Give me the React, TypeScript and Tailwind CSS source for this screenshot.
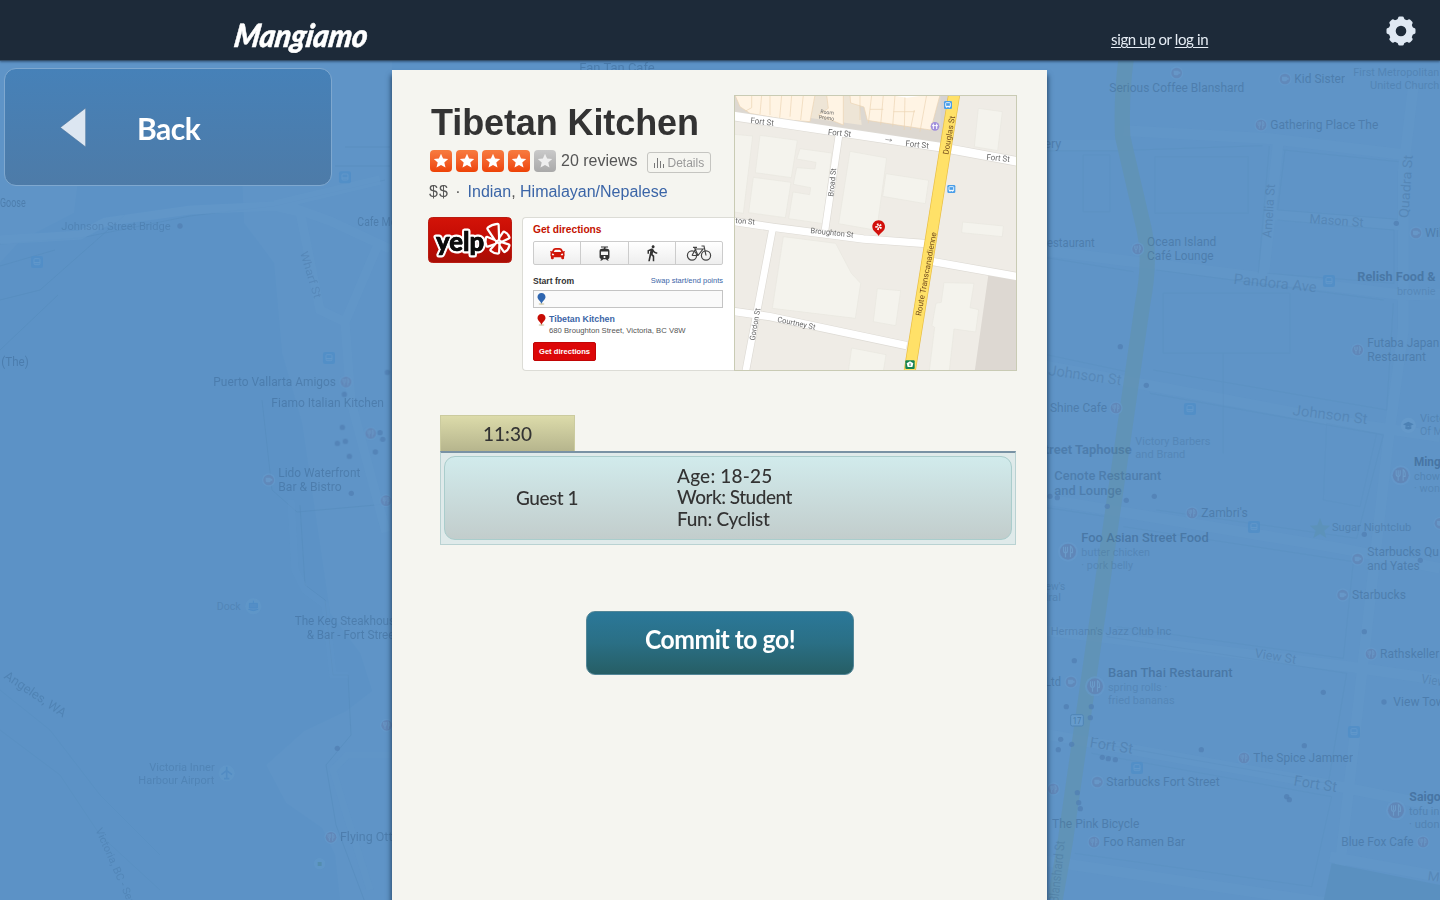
import React from "react";
import { MdDirectionsWalk, MdTram } from "react-icons/md";
import { FaCar } from "react-icons/fa";

type Label = [x: number, y: number, w: number, text: string, size?: number, weight?: number, opacity?: number, rotate?: number];

function Labels({ items, fill }: { items: Label[]; fill: string }) {
  return (
    <g fill={fill} fontFamily="Roboto, sans-serif">
      {items.map(([x, y, w, text, size = 36, weight = 400, opacity = 0.36, rotate = 0], i) => (
        <text key={i} x={x} y={y} fontSize={size} fontWeight={weight} opacity={opacity} textLength={w} lengthAdjust="spacingAndGlyphs" transform={rotate ? `rotate(${rotate} ${x} ${y})` : undefined}>
          {text}
        </text>
      ))}
    </g>
  );
}

function Food({ at, big }: { at: [number, number][]; big?: boolean }) {
  const k = big ? 1.5 : 1;
  return (
    <>
      {at.map(([x, y], i) => (
        <g key={i} transform={`translate(${x} ${y}) scale(${k})`}>
          <circle r="20" fill="#6b9fce" opacity=".6" />
          <circle r="16" fill="#6178a8" opacity=".75" />
          <path d="M-9-10v8q0 4 4 4v9M-5-10v10M-1-10v8q0 4-4 4M5 11v-22q5 3 4 13h-4" fill="none" stroke="#719fcb" strokeWidth="2.2" />
        </g>
      ))}
    </>
  );
}

function Cups({ at }: { at: [number, number][] }) {
  return (
    <>
      {at.map(([x, y], i) => (
        <g key={i} transform={`translate(${x} ${y})`}>
          <circle r="20" fill="#6b9fce" opacity=".6" />
          <circle r="16" fill="#6178a8" opacity=".65" />
          <path d="M-9-7H6v9q0 5-5 5h-5q-5 0-5-5zM6-4h5v6H6" fill="#6b9ac9" />
        </g>
      ))}
    </>
  );
}

function Dots({ at }: { at: [number, number][] }) {
  return (
    <>
      {at.map(([x, y], i) => (
        <circle key={i} cx={x} cy={y} r="8" fill="#4b74a8" opacity=".75" />
      ))}
    </>
  );
}

function Buses({ at }: { at: [number, number][] }) {
  return (
    <>
      {at.map(([x, y], i) => (
        <g key={i} transform={`translate(${x} ${y})`}>
          <rect x="-18" y="-18" width="36" height="36" rx="6" fill="#488bc8" opacity=".8" />
          <rect x="-9" y="-10" width="18" height="18" rx="3" fill="none" stroke="#649bce" strokeWidth="3" />
          <path d="M-9 2H9" stroke="#649bce" strokeWidth="4" />
        </g>
      ))}
    </>
  );
}

function CityBackdrop() {
  const ink = "#17365c";
  return (
    <svg className="absolute inset-0 h-full w-full opacity-65" viewBox="0 0 1440 900" aria-hidden="true">
      <rect width="1440" height="900" fill="#5b92c6" />
      <path d="M0 60H392V900H340l-5-45-13-27-36-25-20-38 38-34 42-20 26-20-12-38-30-40-28-190-20-70-8-90-30-40-5-115-155 25-10 80-54 28-50 55H0z" fill="#6095c7" />
      <rect x="1040" y="60" width="400" height="840" fill="#6095c7" />
      <g fill="none" stroke="#5287b7" strokeWidth="1" opacity=".6">
        <path d="M0 244 80 238 190 216 275 206 385 180M0 266 55 250M0 300l40-10 85-75M0 350l58-55M345 147h45M335 166h55M262 400l10 90 25 22 90-8M300 505l5 80 20 15 8 75h15l3 60-25 30 10 60 30 80" />
        <path d="M0 690l50 40 50 65 60 60M0 730l60 45 40 60 60 55" opacity=".5" />
      </g>
      <g fill="none" stroke="#669acb" strokeWidth="9" opacity=".75">
        <path d="M0 240 80 235 105 222 190 210 275 206 300 212 320 310 345 322 380 240M280 203l50 18 60 28M275 205l105-25M345 322l6 80 35 130" />
        <path d="M291 500l4 70 10 20 20 15 8 70h15M392 755h-45l-14 15 12 40 25 80" strokeWidth="7" opacity=".5" />
      </g>
      <g transform="translate(0 180) scale(.333333)">
        <Labels fill={ink} items={[[0, 81, 77, "Goose"], [184, 150, 328, "Johnson Street Bridge", 34, 400, 0.25], [1072, 139, 118, "Cafe Mo"], [900, 218, 145, "Wharf St", 34, 400, 0.2, 73], [4, 559, 82, "(The)"], [640, 619, 368, "Puerto Vallarta Amigos"], [814, 682, 338, "Fiamo Italian Kitchen"], [835, 892, 246, "Lido Waterfront"], [835, 934, 190, "Bar & Bistro"]]} />
        <Food at={[[1038, 606], [1112, 760], [1158, 962]]} />
        <Cups at={[[806, 900]]} />
        <Dots at={[[540, 138], [1033, 643], [1162, 577], [1027, 742], [1012, 790], [1036, 784], [1048, 829], [1140, 758], [1148, 778], [1126, 816], [1054, 940]]} />
        <Buses at={[[111, 246], [987, 534], [1035, -8]]} />
      </g>
      <g transform="translate(0 540) scale(.333333)">
        <Labels fill={ink} items={[[650, 209, 72, "Dock", 34, 400, 0.22], [884, 255, 320, "The Keg Steakhouse"], [920, 298, 275, "& Bar - Fort Street"], [10, 413, 215, "Angeles, WA", 38, 400, 0.26, 34], [448, 692, 196, "Victoria Inner", 33, 400, 0.24], [415, 732, 228, "Harbour Airport", 33, 400, 0.24], [1020, 904, 190, "Flying Otter"], [286, 870, 260, "Victoria, BC - Seat", 32, 400, 0.2, 66]]} />
        <Food at={[[993, 892], [1160, 556]]} />
        <g fill="#679dcd" opacity=".6"><circle cx="760" cy="199" r="24" /><circle cx="680" cy="700" r="24" /><circle cx="959" cy="971" r="17" /></g>
        <path d="M680 680v35M664 704l16-12 16 12M672 716h16" stroke="#4d88c2" strokeWidth="5" fill="none" />
        <path d="M748 190h24v14h-24zM745 208q15 8 30 0M760 182v8" stroke="#4788c5" strokeWidth="3" fill="#4f8cc6" />
        <rect x="953" y="966" width="12" height="12" fill="#4f8aa3" />
        <Dots at={[[1012, 625]]} />
      </g>
      <g transform="translate(1040 60) scale(.333333)" fill="none">
        <g stroke="#689ccc" opacity=".5" strokeWidth="32">
          <path d="M0 255H240M250 212l440 24 420 50M715 245l-45 410M700 465l380 30M1120 80l-30 250v480l-45 330-160 1410M0 570l520 65 570 70 110-2M0 915l960 180 240 35M0 1315l900 150 300 60M0 1710l930 110 270 40M0 2020l900 160 300 60M0 2400l870 130M870 2390l330 60" />
        </g>
        <g stroke="#5489b9" opacity=".5" strokeWidth="2">
          <path d="M0 272h232l435-15M730 270l345 35M688 258 655 640M735 270l-22 180 360 28M712 480l350 30v160l-380-30M0 590l280 45M350 630l680 90M1060 730l-20 320-700-120M0 880l260 55M330 1000l700 125-80 310-600-85M0 1340l200 30M250 1400l690 105-30 290-680-95M200 1730l720 110-55 330-690-120M155 2080l720 130-60 270-710-100" />
          <path d="M130 285h80v170h-80zM345 290h280v170H345zM370 700h380v180H370zM550 880v300M860 1090l150 30-50 220-110-20z" opacity=".6" />
        </g>
        <path d="M258 0q-15 110-10 230l65 280q20 90-5 220L75 2350l-30 170" stroke="#6394ac" strokeWidth="46" opacity=".9" />
        <path d="M875 2410l325 65v50H850z" fill="#598fbd" />
        <Labels fill={ink} items={[[208, 96, 405, "Serious Coffee Blanshard"], [763, 69, 152, "Kid Sister"], [940, 47, 258, "First Metropolitan", 34, 400, 0.25], [990, 86, 208, "United Church", 34, 400, 0.25], [691, 207, 324, "Gathering Place The"], [0, 264, 64, "tery"], [0, 561, 164, "Restaurant"], [321, 558, 208, "Ocean Island"], [321, 600, 200, "Café Lounge"], [694, 535, 162, "Amelia St", 38, 400, 0.24, -86], [808, 489, 162, "Mason St", 38, 400, 0.24, 4], [1105, 475, 190, "Quadra St", 40, 400, 0.24, -86], [1155, 531, 72, "Wild"], [580, 671, 250, "Pandora Ave", 44, 400, 0.22, 6], [952, 664, 235, "Relish Food &", 36, 700, 0.46], [1071, 704, 116, "brownie", 34, 400, 0.22], [982, 861, 216, "Futaba Japan"], [982, 903, 176, "Restaurant"]]} />
        <Food at={[[663, 195], [293, 567], [953, 870]]} />
        <Cups at={[[410, 39], [735, 57], [1128, 519]]} />
        <Dots at={[[1069, 490], [241, 860]]} />
        <Buses at={[[867, 663]]} />
      </g>
      <g transform="translate(1040 340) scale(.333333)">
        <Labels fill={ink} items={[[24, 105, 220, "Johnson St", 44, 400, 0.22, 8], [757, 225, 225, "Johnson St", 44, 400, 0.22, 7], [30, 216, 171, "Shine Cafe"], [-10, 342, 285, "Street Taphouse", 36, 700], [286, 314, 225, "Victory Barbers", 34, 400, 0.22], [286, 353, 150, "and Brand", 34, 400, 0.22], [43, 420, 321, "Cenote Restaurant", 36, 500], [43, 466, 202, "and Lounge", 36, 500], [484, 531, 139, "Zambri's"], [876, 572, 238, "Sugar Nightclub", 34, 400, 0.3], [124, 606, 382, "Foo Asian Street Food", 37, 500, 0.46], [124, 647, 206, "butter chicken", 34, 400, 0.22], [124, 686, 155, "· pork belly", 34, 400, 0.22], [982, 648, 215, "Starbucks Qu"], [982, 690, 157, "and Yates"], [936, 777, 162, "Starbucks"], [1122, 378, 98, "Mings", 36, 700, 0.5], [1122, 419, 78, "chow", 34, 400, 0.25], [1122, 457, 78, "· won", 34, 400, 0.22], [1140, 247, 76, "Victo", 33, 400, 0.25], [1140, 286, 85, "Of Me", 33, 400, 0.25], [0, 749, 76, "hew's", 33, 400, 0.25], [-12, 784, 75, "edral", 33, 400, 0.25]]} />
        <Food at={[[228, 204], [456, 519]]} />
        <Food big at={[[84, 635], [1082, 406]]} />
        <Cups at={[[953, 657], [908, 765], [1200, 550]]} />
        <Dots at={[[319, 136], [259, 481], [202, 499], [343, 469], [52, 473], [30, 469], [973, 583], [1141, 661]]} />
        <Buses at={[[450, 207], [642, 561]]} />
        <path d="m840 534 8 22 22 1-17 15 6 22-19-12-20 12 7-22-17-15 22-1z" fill="#5b92b4" />
        <g transform="translate(1105 256)"><circle r="23" fill="#699dcc" /><path d="M-16-3 0-11 16-3 0 5zM-9 3v7q9 5 18 0V3" fill="#4478ab" /></g>
      </g>
      <g transform="translate(1040 610) scale(.333333)">
        <Labels fill={ink} items={[[32, 75, 362, "Hermann's Jazz Club Inc", 34, 400, 0.28], [643, 142, 125, "View St", 38, 400, 0.24, 9], [1020, 144, 178, "Rathskeller"], [1142, 218, 115, "View St", 38, 400, 0.24, 9], [204, 202, 374, "Baan Thai Restaurant", 37, 500, 0.46], [204, 242, 178, "spring rolls ·", 34, 400, 0.22], [204, 281, 200, "fried bananas", 34, 400, 0.22], [0, 228, 63, ", Ltd"], [1060, 287, 205, "View Towers"], [148, 411, 130, "Fort St", 44, 400, 0.26, 9], [640, 456, 299, "The Spice Jammer"], [760, 526, 130, "Fort St", 44, 400, 0.26, 9], [199, 528, 340, "Starbucks Fort Street"], [1108, 574, 115, "Saigon", 36, 700, 0.5], [1107, 614, 91, "tofu in", 34, 400, 0.28], [1107, 653, 92, "· udon", 34, 400, 0.28], [36, 654, 262, "The Pink Bicycle"], [190, 708, 245, "Foo Ramen Bar"], [904, 708, 217, "Blue Fox Cafe"], [55, 880, 188, "Blanshard St", 40, 400, 0.24, -84], [1162, 810, 80, "Mea", 38, 400, 0.22, 8]]} />
        <Food at={[[993, 132], [612, 444], [162, 696], [1149, 696], [40, 537]]} />
        <Food big at={[[165, 229], [1068, 601]]} />
        <Cups at={[[93, 216], [172, 516]]} />
        <Dots at={[[973, 65], [103, 152], [850, 247], [79, 290], [154, 290], [151, 323], [62, 388], [55, 419], [95, 403], [187, 442], [205, 446], [226, 449], [484, 419], [793, 407], [112, 548], [116, 578], [121, 596], [740, 560], [748, 569], [1032, 276]]} />
        <Buses at={[[942, 366], [291, 474]]} />
        <rect x="92" y="314" width="38" height="34" rx="5" fill="#6b9fce" stroke="#477cab" strokeWidth="3" />
        <Labels fill="#275784" items={[[98, 342, 26, "17", 28, 400, 0.7]]} />
      </g>
      <g transform="translate(0 60) scale(.333333)"><Labels fill={ink} items={[[1738, 36, 226, "Fan Tan Cafe"]]} /></g>
    </svg>
  );
}

function Gear() {
  return (
    <svg className="h-[30px] w-[30px]" viewBox="-15 -15 30 30" aria-hidden="true">
      <circle r="8.8" fill="none" stroke="#dfe8f3" strokeWidth="7" />
      {[0, 45, 90, 135, 180, 225, 270, 315].map((a) => (
        <path key={a} transform={`rotate(${a})`} d="M-5.200-10Q-3.200-11-2.900-13.200-2.600-14.500-1.400-14.500H1.400Q2.600-14.500 2.900-13.200 3.200-11 5.200-10z" fill="#dfe8f3" />
      ))}
    </svg>
  );
}

function Star({ on }: { on: boolean }) {
  return (
    <span className={on ? "flex h-[22px] w-[22px] items-center justify-center rounded-[4px] bg-linear-to-b from-[#f77b3f] to-[#ee4204]" : "flex h-[22px] w-[22px] items-center justify-center rounded-[4px] bg-linear-to-b from-[#c9c9c9] to-[#a9a9a9]"}>
      <svg className="h-4 w-4" viewBox="0 0 16 16"><path d="M8 .8l2.1 4.7 5.1.5-3.9 3.5 1.2 5.1L8 12l-4.5 2.6 1.2-5.1L.8 6l5.1-.5z" fill={on ? "#fff" : "#eee"} /></svg>
    </span>
  );
}

function YelpLogo() {
  const petals = (
    <>
      <path d="M60.500 11.500Q64 8.500 69.500 8L70 21.500Q69.500 24 67.800 22.500z" />
      <path d="M72.500 21 76 15.800Q79 17 80.300 20.500L74 23.500Q71.500 23.500 72.500 21z" />
      <path d="M74 26.500 80.300 28.500Q79.500 32 76.500 33.800L72.800 28.500Q72 26 74 26.500z" />
      <path d="M70.300 28 70 35.500Q66.500 35.500 63.500 33L68.500 27.200Q70.300 26 70.300 28z" />
      <path d="M66.800 26 59.500 28.500Q58 25 59 21L66.500 24Q68 25 66.800 26z" />
    </>
  );
  return (
    <svg className="h-[46px] w-[84px] shrink-0" viewBox="0 0 84 46" role="img" aria-label="yelp">
      <defs><linearGradient id="yr" x2="0" y2="1"><stop stopColor="#d31408" /><stop offset=".45" stopColor="#c50b04" /><stop offset="1" stopColor="#a80e05" /></linearGradient></defs>
      <rect x=".5" y=".5" width="83" height="45" rx="4" fill="url(#yr)" stroke="#b91c12" />
      <g fill="#fff" stroke="#fff" strokeWidth="4.500" strokeLinejoin="round">{petals}</g>
      <g stroke="#fff" strokeWidth="5" strokeLinejoin="round" paintOrder="stroke">
        <text x="8" y="33.500" fontFamily="Lato, sans-serif" fontWeight="900" fontSize="26" textLength="48" lengthAdjust="spacingAndGlyphs" fill="#0c0c0c" paintOrder="stroke">yelp</text>
      </g>
      <text x="8" y="33.500" fontFamily="Lato, sans-serif" fontWeight="900" fontSize="26" textLength="48" lengthAdjust="spacingAndGlyphs" fill="#0c0c0c" stroke="#0c0c0c" strokeWidth=".6">yelp</text>
      <g fill="#c41208">{petals}</g>
    </svg>
  );
}

function Bike() {
  return (
    <svg className="h-[18px] w-[26px]" viewBox="0 0 26 18" fill="none" stroke="#444" strokeWidth="1.200">
      <circle cx="6" cy="11.500" r="4.600" /><circle cx="20" cy="11.500" r="4.600" />
      <path d="M6 11.500 9.500 5H17L12 11.500H6M8.500 3.500 12 11.500M15.500 2h2.500L20 11.500M7 3.300h4" />
    </svg>
  );
}

function Pin({ color }: { color: string }) {
  return (
    <svg className="h-3 w-[9px] shrink-0" viewBox="0 0 9 12"><ellipse cx="4.500" cy="11" rx="3" ry="1" fill="#d9d3bb" /><path d="M4.500 0C7 0 8.500 1.800 8.500 4 8.500 6.500 5 8.500 4.500 11 4 8.500.5 6.500.5 4 .5 1.800 2 0 4.500 0z" fill={color} /></svg>
  );
}

function Directions() {
  const cell = "flex flex-1 items-center justify-center border-r border-[#ccc] last:border-r-0";
  return (
    <div className="ml-[10px] flex h-[154px] w-[212px] flex-col rounded-l-[4px] border border-r-0 border-[#dcdcd6] bg-white pl-[10px] pr-[11px]">
      <div className="mt-[6px] h-3 text-[10.200px] leading-3 font-bold text-[#c41200]">Get directions</div>
      <div className="mt-[5px] flex h-6 shrink-0 rounded-[2px] border border-[#ccc] bg-linear-to-b from-white to-[#eeeeee]">
        <span className={cell}><FaCar size={15} color="#d01507" /></span>
        <span className={cell}><MdTram size={17} color="#333" /></span>
        <span className={cell}><MdDirectionsWalk size={18} color="#333" /></span>
        <span className={cell}><Bike /></span>
      </div>
      <div className="mt-[10px] flex h-3 shrink-0 items-center justify-between leading-3">
        <span className="text-[8.600px] font-bold text-[#333]">Start from</span>
        <span className="text-[7.500px] text-[#3b65a7]">Swap start/end points</span>
      </div>
      <div className="mt-[3px] flex h-[18px] shrink-0 items-center border border-[#c4c4c4] bg-[#fafafa] pl-[3px]"><Pin color="#2f66b0" /></div>
      <div className="mt-[6px] flex h-[22px] shrink-0 gap-[3px] pl-1">
        <Pin color="#c70c04" />
        <div className="leading-[11px] whitespace-nowrap">
          <div className="text-[8.800px] font-bold text-[#3b65a7]">Tibetan Kitchen</div>
          <div className="text-[7.700px] text-[#555]">680 Broughton Street, Victoria, BC V8W</div>
        </div>
      </div>
      <button className="mt-[6px] h-[19px] w-[63px] shrink-0 rounded-[2px] border border-[#c10505] bg-[#dc0708] text-[7.600px] leading-[17px] font-bold whitespace-nowrap text-white">Get directions</button>
    </div>
  );
}

function StreetMap() {
  return (
    <svg className="h-[276px] w-[283px] shrink-0" viewBox="734 95 283 276" fontFamily="Roboto, sans-serif">
      <g transform="translate(730 90) scale(.333333)">
        <rect x="12" y="15" width="850" height="830" fill="#efece6" />
        <path d="M12 15H655L632 165 12 72z" fill="#ddd8d1" />
        <path d="M240 15h145l10 90-160-22z" fill="#eee5d6" />
        <path d="M632 15h25l-25 145z" fill="#d6d3d2" />
        <g fill="#fff4e4" stroke="#ecd3b2" strokeWidth="2">
          <path d="M15 15h240l-15 80-70-5-110-20-30-20z" /><path d="M290 15h50v90l-75-30 30-20z" /><path d="M360 15h270l-28 105-100-15-90-14-10-40-40-12z" />
          <path d="M65 15v38l-18 10M95 15l-5 58M120 15v60M155 15l-6 70M185 15l-5 65M220 15l-8 75M390 15v75M425 15l-10 85M460 15l-8 90M495 15l-7 95M525 15l-2 105M553 60l-12 60M590 15l-20 110M420 58h40M490 65h65" fill="none" />
        </g>
        <path d="m480 15 50 8 60-8z" fill="#fff" />
        <g fill="#f4f3ed" stroke="#e9e7df" strokeWidth="2">
          <path d="m12 133 56 5-28 232-28-4zM90 136l112 15-18 112-108-15zM70 262l113 15-17 106-110-15zM210 176l95 13-24 212-105-15 13-80 50 8 3-21-52-10 10-50 55 4 3-20-58-10zM360 184l110 20-30 217-114-20zM468 251l128 20-10 70-128-22zM745 55l72 10-14 117-70-12zM698 396l122 12-3 32-122-12zM160 440l157 20 47 90 28 30-16 105-249-30zM442 596l70 6-15 105-67-12zM642 578l90 2-12 73 26 6-9 67-65-9-14 125H598l16-130-8-5 12-67 16-3zM365 774l103 20-8 50H355z" />
        </g>
        <path d="m775 555 87 12v278H734z" fill="#ddd8d2" />
        <g fill="none" stroke="#dedbd5" strokeWidth="30">
          <path d="M10 78 630 171M665 178 865 215" /><path d="m327 135-42 285M128 415 47 845" strokeWidth="24" /><path d="M10 394 130 412 400 447 590 461M610 515 865 560M10 664 120 680 530 767" strokeWidth="26" />
        </g>
        <g fill="none" stroke="#fff" strokeWidth="26">
          <path d="M10 78 630 171M665 178 865 215" /><path d="m327 135-42 285M128 415 47 845" strokeWidth="20" /><path d="M10 394 130 412 400 447 590 461M610 515 865 560M10 664 120 680 530 767" strokeWidth="22" />
        </g>
        <path d="M673 10 538 850" stroke="#e8bd42" strokeWidth="36" />
        <path d="M673 10 538 850" stroke="#ffe168" strokeWidth="32" />
        <Labels fill="#666" items={[[61, 99, 70, "Fort St", 25, 400, 1, 7], [293, 134, 70, "Fort St", 25, 400, 1, 6], [526, 168, 70, "Fort St", 25, 400, 1, 6], [769, 209, 70, "Fort St", 25, 400, 1, 6], [310, 320, 85, "Broad St", 23, 400, 1, -84], [16, 399, 58, "ton St", 23, 400, 1, 5], [241, 429, 129, "Broughton St", 23, 400, 1, 6], [74, 752, 98, "Gordon St", 23, 400, 1, -80], [141, 695, 116, "Courtney St", 23, 400, 1, 12], [271, 70, 40, "Room", 16, 400, 1, 6], [266, 86, 46, "Promo", 16, 400, 1, 7]]} />
        <Labels fill="#77501f" items={[[655, 195, 118, "Douglas St", 24, 400, 1, -80], [573, 679, 255, "Route Transcanadienne", 24, 400, 1, -79.5]]} />
        <path d="m466 148 19 3m-5-4 6 4-7 3" stroke="#888" strokeWidth="2" fill="none" />
        <circle cx="615" cy="109" r="13" fill="#a18fdc" /><path d="M610 101v16m10-16v16m-14-10h18" stroke="#fff" strokeWidth="3" />
        {[[654, 45], [664, 297]].map(([x, y]) => (
          <g key={y} transform={`translate(${x} ${y})`}><rect x="-12" y="-12" width="24" height="24" rx="4" fill="#4a9ee8" /><rect x="-7" y="-7" width="14" height="12" rx="2" fill="none" stroke="#fff" strokeWidth="2.500" /><path d="M-7 4H7M-4 8v-3M4 8v-3" stroke="#fff" strokeWidth="3" /></g>
        ))}
        <rect x="526" y="811" width="28" height="26" rx="3" fill="#138253" /><path d="m530 820 10-6 10 6-3 11h-14z" fill="#fff" /><path d="M540 820v8" stroke="#138253" strokeWidth="3" />
        <path d="M446 391c11 0 19 9 19 19 0 14-14 17-19 28-5-11-19-14-19-28 0-10 8-19 19-19z" fill="#d2100c" />
        <g fill="#fff">{[0, 72, 144, 216, 288].map((a) => <path key={a} d="M444.500 408l-2-8h6l-1 8z" transform={`rotate(${a - 20} 446 410)`} />)}</g>
      </g>
      <rect x="734.500" y="95.500" width="282" height="275" fill="none" stroke="#c9cbb4" />
    </svg>
  );
}

export default function App() {
  return (
    <div className="relative flex h-[900px] w-[1440px] flex-col overflow-hidden bg-[#5e94c7] font-['Liberation_Sans',sans-serif]">
      <CityBackdrop />
      <header className="relative flex h-[61px] shrink-0 items-start border-b border-[#34506c] bg-[#1d2a39] pl-[228px] pr-6 shadow-[0_1px_2px_rgba(20,40,65,0.5)]">
        <svg className="mt-3 h-12 w-[150px]" viewBox="228 12 150 48" role="img" aria-label="Mangiamo">
          <g transform="translate(233 46.500) skewX(-9)">
            <text fill="#fff" stroke="#fff" strokeWidth=".5" fontFamily="Lato, sans-serif" fontSize="32" fontStyle="italic" fontWeight="900" textLength="133" lengthAdjust="spacingAndGlyphs">Mangiamo</text>
          </g>
        </svg>
        <nav className="mt-[29px] ml-auto flex w-[98px] gap-[3px] font-['Lato',sans-serif] text-[15px] leading-5 tracking-[-0.35px] whitespace-nowrap text-[#e6edf5]">
          <a className="underline underline-offset-2">sign up</a><span>or</span><a className="underline underline-offset-2">log in</a>
        </nav>
        <div className="mt-[16px] ml-[177px]"><Gear /></div>
      </header>

      <div className="relative flex flex-1 items-start">
        <aside className="mt-[7px] ml-1 flex h-[118px] w-[328px] items-center rounded-[12px] border border-[#7fa8cf] bg-linear-to-b from-[#4681b8] to-[#4d7ba8] pl-[55px]">
          <svg className="h-[39px] w-[26px]" viewBox="0 0 26 40"><path d="M0 20 26 0v40z" fill="#dce6f1" stroke="#456f99" strokeWidth=".6" /></svg>
          <span className="mt-px ml-[51px] origin-left scale-x-[0.97] font-['Lato',sans-serif] text-[31px] leading-10 font-bold tracking-[-0.5px] text-white">Back</span>
        </aside>

        <main className="mt-[9px] ml-[60px] flex h-[860px] w-[655px] flex-col bg-[#f5f5f0] pt-[25px] shadow-[0_6px_5px_1px_rgba(23,50,78,0.75)]">
          <section className="flex h-[276px] shrink-0">
            <div className="flex w-[342px] flex-col pl-9">
              <h1 className="h-[54px] pl-[3px] text-[36px] leading-[55px] font-bold tracking-[-0.1px] whitespace-nowrap text-[#333]">Tibetan Kitchen</h1>
              <div className="mt-px flex h-[22px] items-center pl-[2px]">
                <div className="flex gap-1">{[1, 2, 3, 4, 5].map((n) => <Star key={n} on={n < 5} />)}</div>
                <span className="ml-[5px] text-[16px] leading-5 whitespace-nowrap text-[#555]">20 reviews</span>
                <span className="mt-[3px] ml-[10px] flex h-[21px] w-[64px] items-center gap-[3px] rounded-[3px] border border-[#c5c5c1] pl-[6px] text-[12px] text-[#999]">
                  <svg className="h-[11px] w-[10px] shrink-0" viewBox="0 0 10 11"><path d="M.5 11V6M3.500 11V1M6.500 11V4M9.500 11V7" stroke="#777" /></svg>Details
                </span>
              </div>
              <div className="mt-2 flex h-6 items-center pl-[1px] text-[16px] leading-6 whitespace-nowrap text-[#555]">
                <span className="tracking-[1.200px]">$$</span><span className="ml-[6px]">·</span>
                <span className="ml-[7px]"><a className="text-[#3b65a7]">Indian</a>, <a className="text-[#3b65a7]">Himalayan/Nepalese</a></span>
              </div>
              <div className="mt-[13px] flex items-start"><YelpLogo /><Directions /></div>
            </div>
            <StreetMap />
          </section>

          <section className="mt-11 ml-12 w-[576px] font-['Lato',sans-serif] text-[19px] leading-[21.500px] font-medium text-[#333]">
            <div className="flex h-9 w-[135px] items-center justify-center border border-b-0 border-[#cbcb9f] bg-linear-to-b from-[#dcdbaa] to-[#b6b58d]">11:30</div>
            <div className="h-[94px] border border-t-2 border-[#b9d2d2] border-t-[#7992a4] bg-[#dfeaea] px-[3px] pt-[3px]">
              <div className="flex h-[84px] items-center rounded-[11px] border border-[#aacdcc] bg-linear-to-b from-[#d1ebec] to-[#c2cdcc]">
                <div className="w-[204px] text-center tracking-[-0.5px]">Guest 1</div>
                <div className="ml-7 pb-[2px]"><p className="tracking-[0.2px]">Age: 18-25</p><p className="tracking-[-0.5px]">Work: Student</p><p className="tracking-[-0.3px]">Fun: Cyclist</p></div>
              </div>
            </div>
          </section>

          <button className="mt-[66px] ml-[194px] h-16 w-[268px] shrink-0 rounded-[9px] border border-[#538697] bg-linear-to-b from-[#2b7899] via-[#2a6f85] to-[#265e65] pb-2 font-['Lato',sans-serif] text-[26px] font-bold tracking-[-0.5px] text-white">
            <span className="inline-block scale-x-95">Commit to go!</span>
          </button>
        </main>
      </div>
    </div>
  );
}
